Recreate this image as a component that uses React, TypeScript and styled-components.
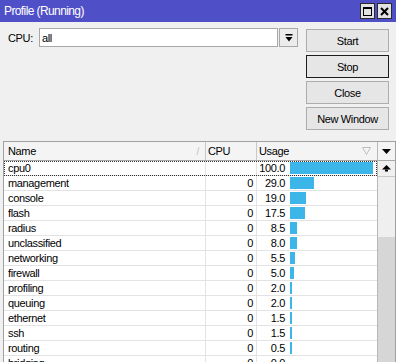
import React from "react";
import styled, { createGlobalStyle } from "styled-components";

const Global = createGlobalStyle`
  html, body { margin: 0; padding: 0; background: #f0f0f0; }
  body { font-family: "Liberation Sans", Arial, sans-serif; }
`;

const Window = styled.div`
  width: 396px;
  height: 362px;
  overflow: hidden;
  background: #f0f0f0;
  display: flex;
  flex-direction: column;
  font-size: 11px;
  letter-spacing: -0.35px;
  color: #000;
`;

const TitleBar = styled.div`
  height: 22px;
  flex: none;
  background: #4f4fc8;
  display: flex;
  align-items: center;
  padding-left: 4px;
  padding-right: 4px;
  color: #fff;
  font-size: 12px;
  letter-spacing: -0.6px;
`;

const TitleText = styled.span`
  flex: 1;
`;

const TitleButtons = styled.div`
  display: flex;
  gap: 2px;
`;

const TitleButton = styled.div`
  width: 13px;
  height: 14px;
  background: #e2e2e2;
  border: 1px solid #2a2a2a;
  display: flex;
  align-items: center;
  justify-content: center;
`;

const TopArea = styled.div`
  display: flex;
  padding: 6px 7px 0 8px;
  flex: none;
`;

const CpuRow = styled.div`
  display: flex;
  align-items: center;
  height: 19px;
`;

const CpuLabel = styled.span`
  width: 31px;
`;

const InputBox = styled.div`
  width: 235px;
  height: 17px;
  background: #fff;
  border: 1px solid #a8a8a8;
  display: flex;
  align-items: center;
  padding-left: 2px;
`;

const DropButton = styled.div`
  width: 17px;
  height: 17px;
  margin-left: 1px;
  background: #ececec;
  border: 1px solid #a8a8a8;
  display: flex;
  align-items: center;
  justify-content: center;
`;

const ButtonColumn = styled.div`
  margin-left: auto;
  margin-top: 1px;
  display: flex;
  flex-direction: column;
  gap: 3px;
`;

const Button = styled.div<{ $default?: boolean }>`
  width: 81px;
  height: 21px;
  background: #e6e6e6;
  border: 1px solid ${(p) => (p.$default ? "#1c1c1c" : "#adadad")};
  display: flex;
  align-items: center;
  justify-content: center;
`;

const Table = styled.div`
  margin: 11px 0 0 3px;
  border-top: 1px solid #a0a0a0;
  border-left: 1px solid #a0a0a0;
  display: flex;
  flex: 1;
  min-height: 0;
  background: #fff;
`;

const Grid = styled.div`
  flex: 1;
  display: flex;
  flex-direction: column;
`;

const HeaderRow = styled.div`
  display: grid;
  grid-template-columns: 202px 51px 1fr;
  height: 18px;
  background: #f4f4f4;
  border-bottom: 1px solid #a8a8a8;
  flex: none;
`;

const HeaderCell = styled.div<{ $pad: number; $last?: boolean }>`
  display: flex;
  align-items: center;
  padding-left: ${(p) => p.$pad}px;
  padding-right: 6px;
  border-right: ${(p) => (p.$last ? "none" : "1px solid #c8c8c8")};
`;

const HeaderLabel = styled.span`
  flex: 1;
`;

const SortMark = styled.span`
  color: #c0c0c0;
  font-size: 10px;
`;

const Row = styled.div<{ $focused?: boolean }>`
  display: grid;
  grid-template-columns: 202px 51px 1fr;
  height: 14px;
  border-bottom: 1px solid #e3e3e3;
  outline: ${(p) => (p.$focused ? "1px dotted #333" : "none")};
  outline-offset: -1px;
  flex: none;
`;

const Cell = styled.div<{ $align?: string }>`
  display: flex;
  align-items: center;
  justify-content: ${(p) => p.$align || "flex-start"};
  border-right: 1px solid #e3e3e3;
  padding: 0 3px 0 4px;
  white-space: nowrap;
  overflow: hidden;
  line-height: 14px;
`;

const UsageCell = styled.div`
  display: flex;
  align-items: center;
  white-space: nowrap;
`;

const UsageNum = styled.span`
  width: 28px;
  text-align: right;
  flex: none;
`;

const Bar = styled.div`
  height: 12px;
  margin-left: 5px;
  background: #3cb6e8;
  flex: none;
`;

const Scroll = styled.div`
  width: 17px;
  flex: none;
  border-left: 1px solid #b8b8b8;
  border-right: 1px solid #a0a0a0;
  display: flex;
  flex-direction: column;
`;

const ScrollHead = styled.div`
  height: 18px;
  background: #f4f4f4;
  border-bottom: 1px solid #a8a8a8;
  display: flex;
  align-items: center;
  justify-content: center;
  flex: none;
`;

const ScrollArrow = styled.div`
  height: 15px;
  background: #f0f0f0;
  border-bottom: 1px solid #c8c8c8;
  display: flex;
  align-items: center;
  justify-content: center;
  flex: none;
`;

const ScrollTrack = styled.div`
  height: 60px;
  background: #efefef;
  flex: none;
`;

const ScrollThumb = styled.div`
  flex: 1;
  background: #d6d6d6;
`;

const rows: [string, string, number][] = [
  ["cpu0", "", 100.0],
  ["management", "0", 29.0],
  ["console", "0", 19.0],
  ["flash", "0", 17.5],
  ["radius", "0", 8.5],
  ["unclassified", "0", 8.0],
  ["networking", "0", 5.5],
  ["firewall", "0", 5.0],
  ["profiling", "0", 2.0],
  ["queuing", "0", 2.0],
  ["ethernet", "0", 1.5],
  ["ssh", "0", 1.5],
  ["routing", "0", 0.5],
  ["bridging", "0", 0.0],
];

const barWidth = (v: number) => (v <= 0 ? 0 : Math.max(2, Math.round(v * 0.83)));

export default function App() {
  return (
    <>
      <Global />
      <Window>
        <TitleBar>
          <TitleText>Profile (Running)</TitleText>
          <TitleButtons>
            <TitleButton>
              <svg width="9" height="9" viewBox="0 0 9 9">
                <rect x="0.5" y="0.5" width="8" height="8" fill="none" stroke="#000" />
                <rect x="0" y="0" width="9" height="2" fill="#000" />
              </svg>
            </TitleButton>
            <TitleButton>
              <svg width="9" height="9" viewBox="0 0 9 9">
                <path d="M1 1 L8 8 M8 1 L1 8" stroke="#000" strokeWidth="2" />
              </svg>
            </TitleButton>
          </TitleButtons>
        </TitleBar>
        <TopArea>
          <CpuRow>
            <CpuLabel>CPU:</CpuLabel>
            <InputBox>all</InputBox>
            <DropButton>
              <svg width="8" height="8" viewBox="0 0 8 8">
                <rect x="0.5" y="0" width="7" height="1.5" fill="#000" />
                <path d="M0.5 3 H7.5 L4 7.5 Z" fill="#000" />
              </svg>
            </DropButton>
          </CpuRow>
          <ButtonColumn>
            <Button>Start</Button>
            <Button $default>Stop</Button>
            <Button>Close</Button>
            <Button>New Window</Button>
          </ButtonColumn>
        </TopArea>
        <Table>
          <Grid>
            <HeaderRow>
              <HeaderCell $pad={4}>
                <HeaderLabel>Name</HeaderLabel>
                <SortMark>/</SortMark>
              </HeaderCell>
              <HeaderCell $pad={2}>
                <HeaderLabel>CPU</HeaderLabel>
              </HeaderCell>
              <HeaderCell $pad={2} $last>
                <HeaderLabel>Usage</HeaderLabel>
                <svg width="9" height="8" viewBox="0 0 9 8">
                  <path d="M0.5 0.5 H8.5 L4.5 7.5 Z" fill="none" stroke="#bdbdbd" />
                </svg>
              </HeaderCell>
            </HeaderRow>
            {rows.map(([name, cpu, usage], i) => (
              <Row key={name} $focused={i === 0}>
                <Cell>{name}</Cell>
                <Cell $align="flex-end">{cpu}</Cell>
                <UsageCell>
                  <UsageNum>{usage.toFixed(1)}</UsageNum>
                  {barWidth(usage) > 0 && <Bar style={{ width: barWidth(usage) }} />}
                </UsageCell>
              </Row>
            ))}
          </Grid>
          <Scroll>
            <ScrollHead>
              <svg width="9" height="5" viewBox="0 0 9 5">
                <path d="M0 0 H9 L4.5 5 Z" fill="#000" />
              </svg>
            </ScrollHead>
            <ScrollArrow>
              <svg width="9" height="7" viewBox="0 0 9 7">
                <path d="M0 4.5 H9 L4.5 0 Z" fill="#000" />
                <rect x="3" y="4.5" width="3" height="2" fill="#000" />
              </svg>
            </ScrollArrow>
            <ScrollTrack />
            <ScrollThumb />
          </Scroll>
        </Table>
      </Window>
    </>
  );
}
